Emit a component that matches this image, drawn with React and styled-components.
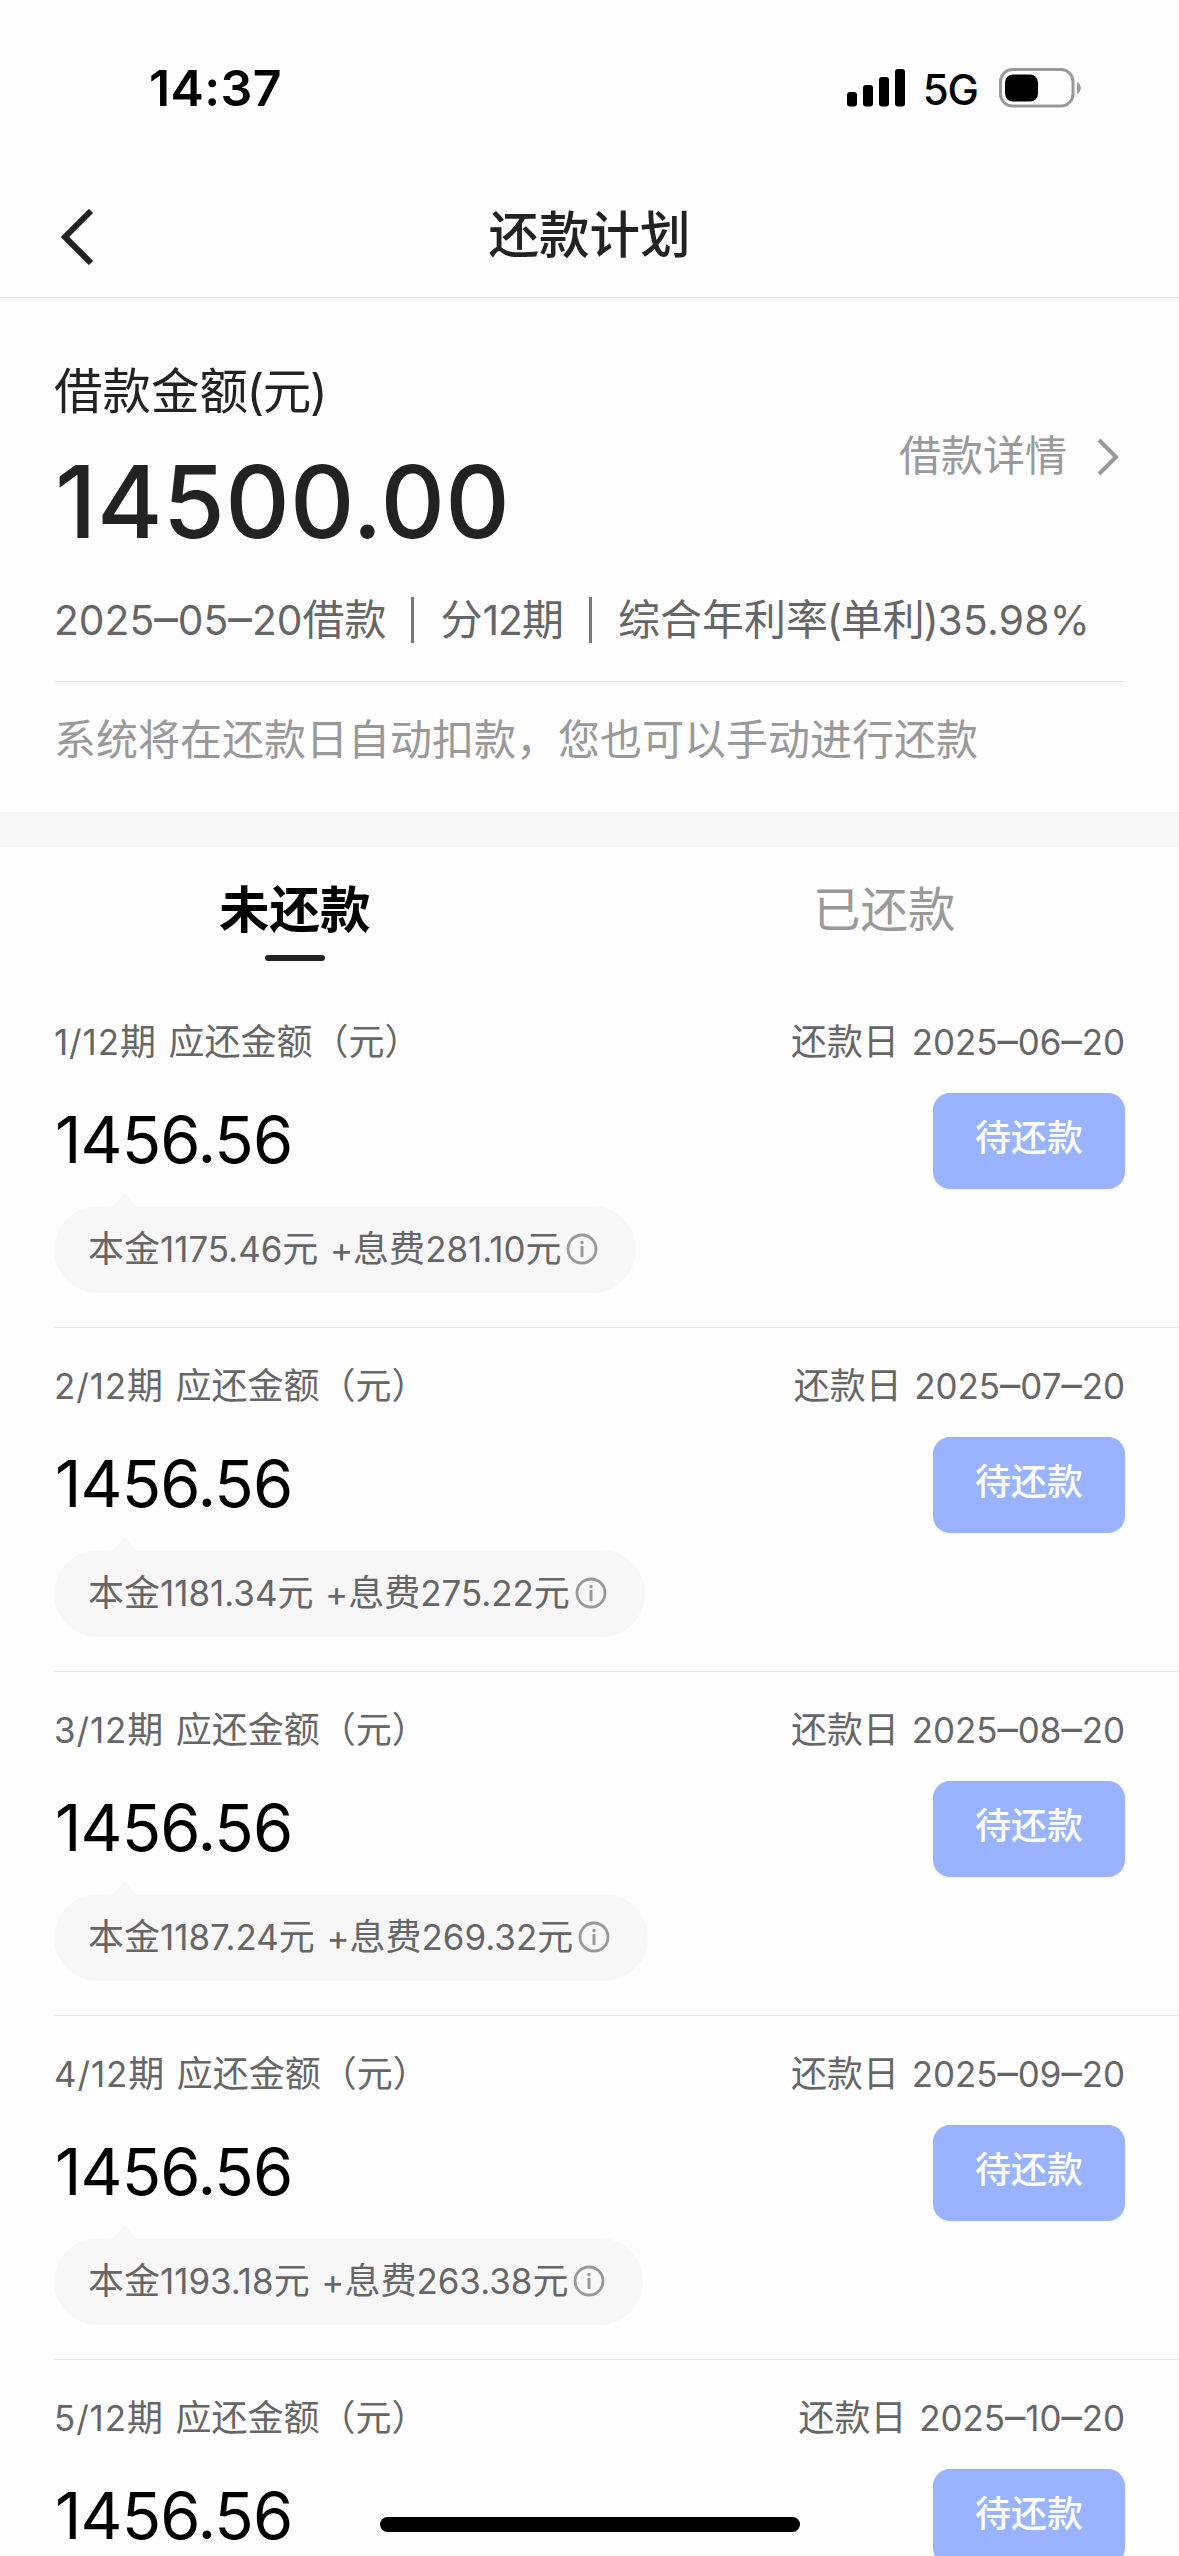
import React from "react";
import styled, { createGlobalStyle } from "styled-components";

const GlobalStyle = createGlobalStyle`
  body {
    margin: 0;
    background: #fefefe;
  }
  * {
    box-sizing: border-box;
  }
`;

const Page = styled.div`
  position: relative;
  width: 1179px;
  height: 2556px;
  overflow: hidden;
  background: #fefefe;
  color: #222;
  font-family: "Inter", "Noto Sans CJK SC", sans-serif;
  white-space: nowrap;
`;

const StatusBar = styled.div`
  display: flex;
  align-items: center;
  justify-content: space-between;
  height: 176px;
  padding: 0 98px 0 149px;
  color: #000;
`;

const Time = styled.span`
  font-size: 50px;
  font-weight: 600;
  letter-spacing: 0.4px;
`;

const StatusIcons = styled.div`
  display: flex;
  align-items: center;
`;

const Network = styled.span`
  margin: 3px 21px 0 18px;
  font-size: 42px;
  font-weight: 500;
  letter-spacing: -1px;
`;

const NavBar = styled.div`
  display: grid;
  grid-template-columns: 1fr auto 1fr;
  align-items: center;
  height: 122px;
  padding: 0 55px;
  border-bottom: 1px solid #e5e5e5;
`;

const NavTitle = styled.h1`
  margin: 0 0 4px;
  font-size: 50.5px;
  font-weight: 500;
  line-height: 72px;
`;

const Summary = styled.section`
  padding: 54px 54px 14px;
`;

const SummaryTop = styled.div`
  display: flex;
  justify-content: space-between;
`;

const SummaryLabel = styled.div`
  font-size: 48.5px;
  line-height: 80px;
  height: 78px;
`;

const Total = styled.div`
  padding-left: 1px;
  font-size: 100px;
  font-weight: 500;
  line-height: 144px;
  letter-spacing: 0.4px;
`;

const DetailLink = styled.div`
  display: flex;
  align-items: center;
  gap: 29px;
  height: 78px;
  margin: 65px 5px 0 0;
  color: #999;
  font-size: 42px;
  line-height: 78px;

  svg {
    margin-top: 1px;
  }
`;

const Terms = styled.div`
  color: #666;
  font-size: 42px;
  line-height: 92px;
`;

const Num = styled.span`
  font-size: 0.97em;
  letter-spacing: ${(props) => props.$spacing || 0}px;
`;

const Dash = styled.span`
  font-size: 1.16em;
  line-height: 0;
`;

const Paren = styled.span`
  margin: 0 -0.03em;
`;

const Bar = styled.i`
  display: inline-block;
  width: 3px;
  height: 46px;
  margin: 0 26px 0 25px;
  background: #777;
  vertical-align: -8px;
`;

const Notice = styled.div`
  margin-top: 14px;
  border-top: 1px solid #e5e5e5;
  color: #999;
  font-size: 42px;
  line-height: 116px;
`;

const Band = styled.div`
  height: 35px;
  background: #f7f7f7;
`;

const Tabs = styled.div`
  display: grid;
  grid-template-columns: 1fr 1fr;
  height: 137px;
  padding-top: 18px;
`;

const Tab = styled.div`
  display: flex;
  flex-direction: column;
  align-items: center;
  color: ${(props) => (props.$active ? "#000" : "#999")};
  font-size: ${(props) => (props.$active ? 50.5 : 47.5)}px;
  font-weight: ${(props) => (props.$active ? 700 : 400)};
  line-height: 90px;

  &::after {
    content: "";
    width: 60px;
    height: 6px;
    border-radius: 3px;
    background: ${(props) => (props.$active ? "#222" : "transparent")};
  }
`;

const Row = styled.div`
  height: 344px;
  margin-left: 54px;
  padding: 23px 54px 0 0;
  border-bottom: 1px solid #e8e8e8;
`;

const RowHead = styled.div`
  display: flex;
  justify-content: space-between;
  color: #666;
  font-size: 36px;
  line-height: 70px;
  height: 72px;
  word-spacing: 2.5px;
`;

const RowBody = styled.div`
  display: flex;
  justify-content: space-between;
  margin-top: 14px;
`;

const Amount = styled.div`
  padding-left: 1px;
  color: #000;
  font-size: 65px;
  line-height: 94px;
  letter-spacing: -0.9px;
`;

const PayButton = styled.button`
  width: 192px;
  height: 96px;
  padding: 0 0 6px;
  border: 0;
  border-radius: 17px;
  background: #99b3ff;
  color: #fff;
  font-family: inherit;
  font-size: 36px;
  font-weight: 500;
  line-height: 90px;
`;

const Breakdown = styled.div`
  position: relative;
  display: inline-flex;
  align-items: center;
  height: 87px;
  margin-top: 17px;
  padding: 0 38px 0 34px;
  border-radius: 44px;
  background: #f7f7f7;
  color: #666;
  font-size: 36px;
  line-height: 87px;
  word-spacing: 1.5px;
`;

const Tip = styled.svg`
  position: absolute;
  left: 54px;
  top: -12px;
`;

const InfoIcon = styled.svg`
  margin: -1px 0 0 5px;
`;

const HomeIndicator = styled.div`
  position: absolute;
  left: 380px;
  bottom: 24px;
  width: 420px;
  height: 15px;
  border-radius: 8px;
  background: #000;
`;

const plans = [
  { term: 1, date: "2025-06-20", principal: "1175.46", interest: "281.10" },
  { term: 2, date: "2025-07-20", principal: "1181.34", interest: "275.22" },
  { term: 3, date: "2025-08-20", principal: "1187.24", interest: "269.32" },
  { term: 4, date: "2025-09-20", principal: "1193.18", interest: "263.38" },
  { term: 5, date: "2025-10-20" },
];

const Signal = () => (
  <svg width="58" height="38" viewBox="0 0 58 38">
    <rect x="0" y="23" width="10" height="14.5" rx="3" />
    <rect x="16" y="16" width="10" height="21.5" rx="3" />
    <rect x="32" y="8" width="10" height="29.5" rx="3" />
    <rect x="48" y="0" width="10" height="37.5" rx="3" />
  </svg>
);

const Battery = () => (
  <svg width="82" height="40" viewBox="0 0 82 40">
    <rect x="1.5" y="1.5" width="72.5" height="36.5" rx="12" fill="none" stroke="#999" strokeWidth="3" />
    <rect x="6" y="6.5" width="33" height="27" rx="8" />
    <path d="M78 14c5 2.500 5 9.500 0 12z" fill="#999" />
  </svg>
);

const DateText = ({ value }) => {
  const [year, month, day] = value.split("-");
  return (
    <Num>
      {year}
      <Dash>–</Dash>
      {month}
      <Dash>–</Dash>
      {day}
    </Num>
  );
};

const PlanRow = ({ plan }) => (
  <Row>
    <RowHead>
      <span>
        <Num $spacing={0.9}>{plan.term}/12</Num>期 应还金额（元）
      </span>
      <span>
        还款日 <DateText value={plan.date} />
      </span>
    </RowHead>
    <RowBody>
      <Amount>1456.56</Amount>
      <PayButton>待还款</PayButton>
    </RowBody>
    {plan.principal && (
      <Breakdown>
        <Tip width="34" height="13" viewBox="0 0 34 13">
          <path d="M0 13C8 11 12 6 15 1q2-2 4 0c3 5 7 10 15 12z" fill="#f9f9f9" />
        </Tip>
        <span>
          本金<Num>{plan.principal}</Num>元 <Num>+</Num>息费<Num>{plan.interest}</Num>元
        </span>
        <InfoIcon width="32" height="32" viewBox="0 0 32 32" fill="none" stroke="#999">
          <circle cx="16" cy="16" r="14" strokeWidth="2.800" />
          <path d="M16 13v11M16 8v3.200" strokeWidth="3" />
        </InfoIcon>
      </Breakdown>
    )}
  </Row>
);

const App = () => {
  return (
    <Page>
      <GlobalStyle />
      <StatusBar>
        <Time>14:37</Time>
        <StatusIcons>
          <Signal />
          <Network>5G</Network>
          <Battery />
        </StatusIcons>
      </StatusBar>
      <NavBar>
        <svg width="40" height="56" viewBox="0 0 40 56" fill="none" stroke="#222" strokeWidth="6">
          <path d="M36 2L10 28l26 26" />
        </svg>
        <NavTitle>还款计划</NavTitle>
      </NavBar>
      <Summary>
        <SummaryTop>
          <div>
            <SummaryLabel>
              借款金额<Paren>(</Paren>元<Paren>)</Paren>
            </SummaryLabel>
            <Total>14500.00</Total>
          </div>
          <DetailLink>
            借款详情
            <svg width="24" height="38" viewBox="0 0 24 38" fill="none" stroke="#999" strokeWidth="4">
              <path d="M3 2l17 17L3 36" />
            </svg>
          </DetailLink>
        </SummaryTop>
        <Terms>
          <DateText value="2025-05-20" />借款<Bar />分<Num $spacing={-1}>12</Num>期<Bar />
          综合年利率<Paren>(</Paren>单利<Paren>)</Paren><Num $spacing={0.3}>35.98%</Num>
        </Terms>
        <Notice>系统将在还款日自动扣款，您也可以手动进行还款</Notice>
      </Summary>
      <Band />
      <Tabs>
        <Tab $active>未还款</Tab>
        <Tab>已还款</Tab>
      </Tabs>
      {plans.map((plan) => (
        <PlanRow key={plan.term} plan={plan} />
      ))}
      <HomeIndicator />
    </Page>
  );
};

export default App;
